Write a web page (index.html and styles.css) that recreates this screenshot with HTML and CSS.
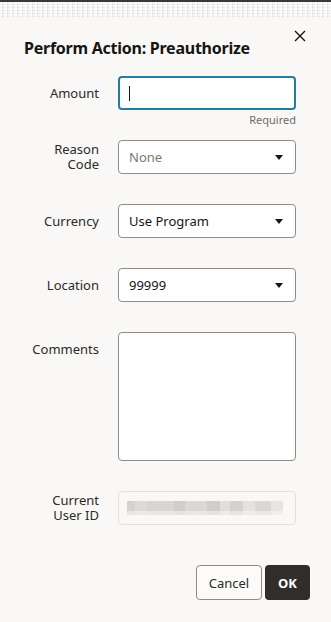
FILE: index.html
```html
<!DOCTYPE html>
<html lang="en">
<head>
    <meta charset="UTF-8">
    <meta name="viewport" content="width=device-width, initial-scale=1.0">
    <title>Perform Action: Preauthorize</title>
    <link rel="stylesheet" href="styles.css">
</head>
<body>

    <!-- Blurred page behind the dialog -->
    <div class="backdrop-strip"></div>

    <div class="dialog">
        <div class="dialog-header">
            <h1>Perform Action: Preauthorize</h1>
            <button class="close-btn" aria-label="Close">
                <svg width="12" height="12" viewBox="0 0 12 12">
                    <path d="M1 1 L11 11 M11 1 L1 11" stroke="#161513" stroke-width="1.4" fill="none"/>
                </svg>
            </button>
        </div>

        <div class="form">
            <!-- Amount -->
            <div class="label"><span>Amount</span></div>
            <div class="field">
                <div class="input focused"><span class="caret"></span></div>
                <div class="help">Required</div>
            </div>

            <!-- Reason Code -->
            <div class="label"><span>Reason<br>Code</span></div>
            <div class="field">
                <div class="input select"><span class="placeholder">None</span><span class="arrow"></span></div>
                <div class="help"></div>
            </div>

            <!-- Currency -->
            <div class="label"><span>Currency</span></div>
            <div class="field">
                <div class="input select"><span>Use Program</span><span class="arrow"></span></div>
                <div class="help"></div>
            </div>

            <!-- Location -->
            <div class="label"><span>Location</span></div>
            <div class="field">
                <div class="input select"><span>99999</span><span class="arrow"></span></div>
                <div class="help"></div>
            </div>

            <!-- Comments -->
            <div class="label"><span>Comments</span></div>
            <div class="field">
                <div class="input textarea"></div>
                <div class="help"></div>
            </div>

            <!-- Current User ID (read only, blurred) -->
            <div class="label"><span>Current<br>User ID</span></div>
            <div class="field">
                <div class="input readonly"><div class="blurred"></div></div>
            </div>
        </div>

        <div class="dialog-footer">
            <button class="btn btn-cancel">Cancel</button>
            <button class="btn btn-ok">OK</button>
        </div>
    </div>

</body>
</html>
```

FILE: styles.css
```css
/* Base */
body {
    font-family: 'Noto Sans', 'Open Sans', sans-serif;
    background-color: #f9f8f6;
    color: #161513;
    margin: 0;
    width: 331px;
    height: 622px;
    overflow: hidden;
}

/* Strip of blurred page showing above the dialog */
.backdrop-strip {
    height: 17px;
    border-top: 2px solid #3a3836;
    box-sizing: border-box;
    background-color: #ececec;
    background-image:
        repeating-linear-gradient(90deg, rgba(255,255,255,0.7) 0 2px, rgba(0,0,0,0.03) 2px 3px, rgba(255,255,255,0.3) 3px 5px),
        repeating-linear-gradient(0deg, rgba(0,0,0,0.04) 0 1px, rgba(255,255,255,0.4) 1px 3px);
}

/* Dialog */
.dialog {
    padding: 0 21px 0 24px;
}

.dialog-header {
    display: flex;
    justify-content: space-between;
    align-items: flex-start;
    height: 59px;
}

.dialog-header h1 {
    font-size: 16px;
    font-weight: bold;
    margin: 20px 0 0 0;
    letter-spacing: -0.25px;
}

.close-btn {
    background: none;
    border: none;
    padding: 0;
    width: 14px;
    height: 14px;
    margin-top: 12px;
    margin-right: 3px;
    display: flex;
    align-items: center;
    justify-content: center;
}

/* Form layout */
.form {
    display: grid;
    grid-template-columns: 75px 178px;
    column-gap: 19px;
}

.label {
    align-self: start;
    height: 34px;
    display: flex;
    align-items: center;
    justify-content: flex-end;
    text-align: right;
    font-size: 13px;
    line-height: 15px;
    color: #2b2a28;
}

.input {
    height: 34px;
    box-sizing: border-box;
    border: 1px solid #908c87;
    border-radius: 4px;
    background-color: #fff;
    display: flex;
    align-items: center;
    padding: 0 12px 0 10px;
    font-size: 13px;
    color: #161513;
}

.input.focused {
    border: 2px solid #227e9e;
    padding-left: 9px;
}

.caret {
    width: 1px;
    height: 15px;
    background-color: #161513;
}

.select {
    justify-content: space-between;
}

.placeholder {
    color: #7b7873;
}

.arrow {
    width: 0;
    height: 0;
    border-left: 4px solid transparent;
    border-right: 4px solid transparent;
    border-top: 5px solid #161513;
}

.textarea {
    height: 129px;
}

.readonly {
    height: 34px;
    background-color: transparent;
    border-color: #e4e1dd;
    padding: 0 12px 0 8px;
}

/* Blurred user id value */
.blurred {
    width: 156px;
    height: 14px;
    background-image:
        linear-gradient(to bottom, transparent 0 10px, rgba(249,248,246,0.5) 10px 14px),
        linear-gradient(90deg,
            #d3d2d1 0 8px, #dcdbda 8px 20px, #d7d6d5 20px 47px, #cfcecd 47px 58px,
            #d9d8d7 58px 80px, #cfcecd 80px 93px, #e0dfde 93px 103px, #d3d2d1 103px 116px,
            #e3e2e1 116px 128px, #d9d8d7 128px 144px, #e6e5e4 144px 156px);
}

.help {
    height: 30px;
    font-size: 11px;
    line-height: 20px;
    text-align: right;
    color: #6f6c68;
}

/* Footer buttons */
.dialog-footer {
    display: flex;
    justify-content: flex-end;
    gap: 3px;
    margin-top: 40px;
}

.btn {
    font-family: inherit;
    font-size: 13px;
    height: 35px;
    border-radius: 4px;
    cursor: pointer;
}

.btn-cancel {
    width: 66px;
    background-color: #fcfbfa;
    border: 1px solid #8f8b86;
    color: #2b2a28;
}

.btn-ok {
    width: 45px;
    background-color: #312d2a;
    border: none;
    color: #fff;
    font-weight: bold;
}
```
